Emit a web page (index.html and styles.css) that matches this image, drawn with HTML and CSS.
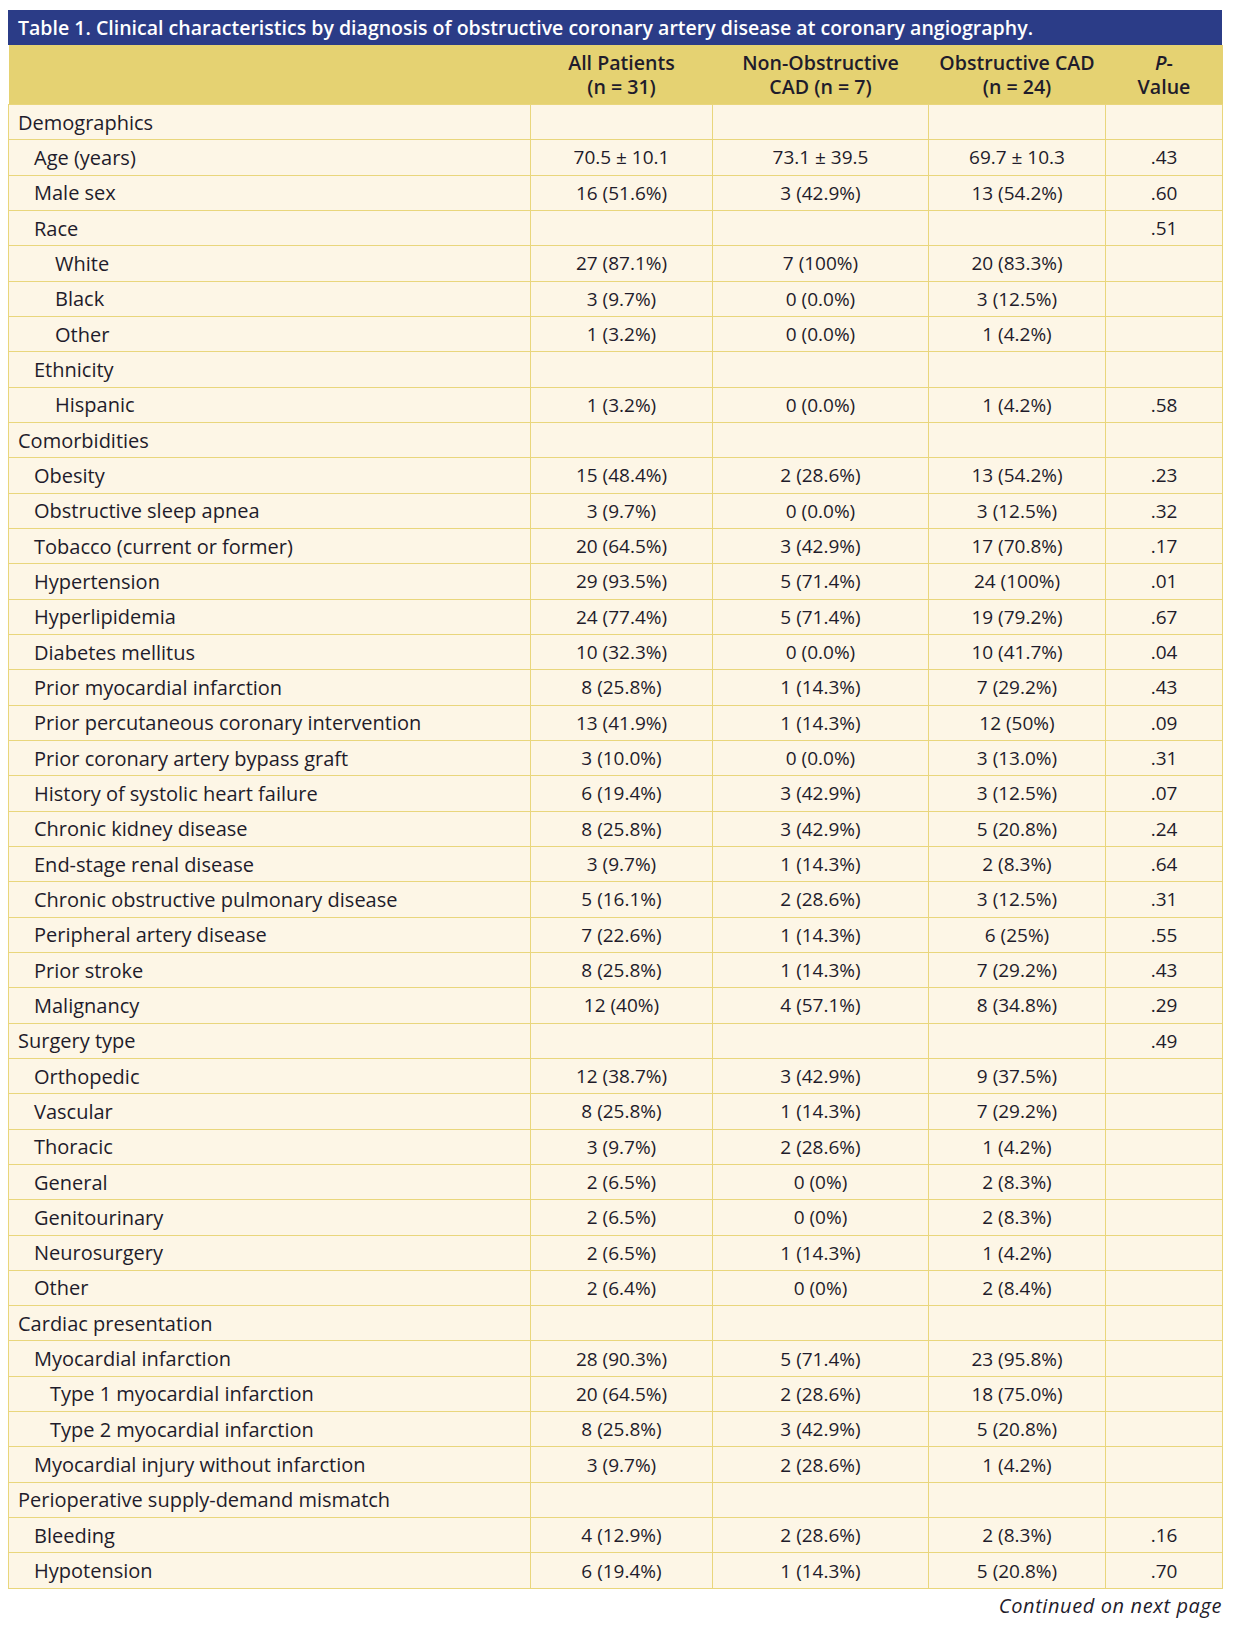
FILE: index.html
```html
<!DOCTYPE html>
<html lang="en">
<head>
<meta charset="utf-8">
<title>Table 1</title>
<link rel="stylesheet" href="styles.css">
</head>
<body>
<div class="page">
  <div class="caption">Table 1. Clinical characteristics by diagnosis of obstructive coronary artery disease at coronary angiography.</div>
  <table class="data">
    <colgroup>
      <col class="c-label"><col class="c-all"><col class="c-non"><col class="c-obs"><col class="c-p">
    </colgroup>
    <thead>
      <tr>
        <th></th>
        <th>All Patients<br>(n = 31)</th>
        <th>Non-Obstructive<br>CAD (n = 7)</th>
        <th>Obstructive CAD<br>(n = 24)</th>
        <th><i>P</i>-<br>Value</th>
      </tr>
    </thead>
    <tbody>
      <tr><td class="l0">Demographics</td><td></td><td></td><td></td><td></td></tr>
      <tr><td class="l1">Age (years)</td><td>70.5 ± 10.1</td><td>73.1 ± 39.5</td><td>69.7 ± 10.3</td><td>.43</td></tr>
      <tr><td class="l1">Male sex</td><td>16 (51.6%)</td><td>3 (42.9%)</td><td>13 (54.2%)</td><td>.60</td></tr>
      <tr><td class="l1">Race</td><td></td><td></td><td></td><td>.51</td></tr>
      <tr><td class="l2">White</td><td>27 (87.1%)</td><td>7 (100%)</td><td>20 (83.3%)</td><td></td></tr>
      <tr><td class="l2">Black</td><td>3 (9.7%)</td><td>0 (0.0%)</td><td>3 (12.5%)</td><td></td></tr>
      <tr><td class="l2">Other</td><td>1 (3.2%)</td><td>0 (0.0%)</td><td>1 (4.2%)</td><td></td></tr>
      <tr><td class="l1">Ethnicity</td><td></td><td></td><td></td><td></td></tr>
      <tr><td class="l2">Hispanic</td><td>1 (3.2%)</td><td>0 (0.0%)</td><td>1 (4.2%)</td><td>.58</td></tr>
      <tr><td class="l0">Comorbidities</td><td></td><td></td><td></td><td></td></tr>
      <tr><td class="l1">Obesity</td><td>15 (48.4%)</td><td>2 (28.6%)</td><td>13 (54.2%)</td><td>.23</td></tr>
      <tr><td class="l1">Obstructive sleep apnea</td><td>3 (9.7%)</td><td>0 (0.0%)</td><td>3 (12.5%)</td><td>.32</td></tr>
      <tr><td class="l1">Tobacco (current or former)</td><td>20 (64.5%)</td><td>3 (42.9%)</td><td>17 (70.8%)</td><td>.17</td></tr>
      <tr><td class="l1">Hypertension</td><td>29 (93.5%)</td><td>5 (71.4%)</td><td>24 (100%)</td><td>.01</td></tr>
      <tr><td class="l1">Hyperlipidemia</td><td>24 (77.4%)</td><td>5 (71.4%)</td><td>19 (79.2%)</td><td>.67</td></tr>
      <tr><td class="l1">Diabetes mellitus</td><td>10 (32.3%)</td><td>0 (0.0%)</td><td>10 (41.7%)</td><td>.04</td></tr>
      <tr><td class="l1">Prior myocardial infarction</td><td>8 (25.8%)</td><td>1 (14.3%)</td><td>7 (29.2%)</td><td>.43</td></tr>
      <tr><td class="l1">Prior percutaneous coronary intervention</td><td>13 (41.9%)</td><td>1 (14.3%)</td><td>12 (50%)</td><td>.09</td></tr>
      <tr><td class="l1">Prior coronary artery bypass graft</td><td>3 (10.0%)</td><td>0 (0.0%)</td><td>3 (13.0%)</td><td>.31</td></tr>
      <tr><td class="l1">History of systolic heart failure</td><td>6 (19.4%)</td><td>3 (42.9%)</td><td>3 (12.5%)</td><td>.07</td></tr>
      <tr><td class="l1">Chronic kidney disease</td><td>8 (25.8%)</td><td>3 (42.9%)</td><td>5 (20.8%)</td><td>.24</td></tr>
      <tr><td class="l1">End-stage renal disease</td><td>3 (9.7%)</td><td>1 (14.3%)</td><td>2 (8.3%)</td><td>.64</td></tr>
      <tr><td class="l1">Chronic obstructive pulmonary disease</td><td>5 (16.1%)</td><td>2 (28.6%)</td><td>3 (12.5%)</td><td>.31</td></tr>
      <tr><td class="l1">Peripheral artery disease</td><td>7 (22.6%)</td><td>1 (14.3%)</td><td>6 (25%)</td><td>.55</td></tr>
      <tr><td class="l1">Prior stroke</td><td>8 (25.8%)</td><td>1 (14.3%)</td><td>7 (29.2%)</td><td>.43</td></tr>
      <tr><td class="l1">Malignancy</td><td>12 (40%)</td><td>4 (57.1%)</td><td>8 (34.8%)</td><td>.29</td></tr>
      <tr><td class="l0">Surgery type</td><td></td><td></td><td></td><td>.49</td></tr>
      <tr><td class="l1">Orthopedic</td><td>12 (38.7%)</td><td>3 (42.9%)</td><td>9 (37.5%)</td><td></td></tr>
      <tr><td class="l1">Vascular</td><td>8 (25.8%)</td><td>1 (14.3%)</td><td>7 (29.2%)</td><td></td></tr>
      <tr><td class="l1">Thoracic</td><td>3 (9.7%)</td><td>2 (28.6%)</td><td>1 (4.2%)</td><td></td></tr>
      <tr><td class="l1">General</td><td>2 (6.5%)</td><td>0 (0%)</td><td>2 (8.3%)</td><td></td></tr>
      <tr><td class="l1">Genitourinary</td><td>2 (6.5%)</td><td>0 (0%)</td><td>2 (8.3%)</td><td></td></tr>
      <tr><td class="l1">Neurosurgery</td><td>2 (6.5%)</td><td>1 (14.3%)</td><td>1 (4.2%)</td><td></td></tr>
      <tr><td class="l1">Other</td><td>2 (6.4%)</td><td>0 (0%)</td><td>2 (8.4%)</td><td></td></tr>
      <tr><td class="l0">Cardiac presentation</td><td></td><td></td><td></td><td></td></tr>
      <tr><td class="l1">Myocardial infarction</td><td>28 (90.3%)</td><td>5 (71.4%)</td><td>23 (95.8%)</td><td></td></tr>
      <tr><td class="l1b">Type 1 myocardial infarction</td><td>20 (64.5%)</td><td>2 (28.6%)</td><td>18 (75.0%)</td><td></td></tr>
      <tr><td class="l1b">Type 2 myocardial infarction</td><td>8 (25.8%)</td><td>3 (42.9%)</td><td>5 (20.8%)</td><td></td></tr>
      <tr><td class="l1">Myocardial injury without infarction</td><td>3 (9.7%)</td><td>2 (28.6%)</td><td>1 (4.2%)</td><td></td></tr>
      <tr><td class="l0">Perioperative supply-demand mismatch</td><td></td><td></td><td></td><td></td></tr>
      <tr><td class="l1">Bleeding</td><td>4 (12.9%)</td><td>2 (28.6%)</td><td>2 (8.3%)</td><td>.16</td></tr>
      <tr><td class="l1">Hypotension</td><td>6 (19.4%)</td><td>1 (14.3%)</td><td>5 (20.8%)</td><td>.70</td></tr>
    </tbody>
  </table>
  <div class="continued">Continued on next page</div>
</div>
</body>
</html>
```

FILE: styles.css
```css
html, body {
  margin: 0;
  padding: 0;
  background: #ffffff;
}

.page {
  padding: 10px 22px 0 8px;
  font-family: "Open Sans", "Noto Sans", "Liberation Sans", sans-serif;
  color: #1f1c2b;
}

.caption {
  background: #2b3c87;
  color: #ffffff;
  font-size: 19.55px;
  font-weight: 600;
  height: 35px;
  line-height: 35px;
  padding-left: 10px;
  white-space: nowrap;
}

.data {
  width: 1214px;
  border-collapse: collapse;
  table-layout: fixed;
  font-size: 19px;
}

.c-label { width: 522px; }
.c-all { width: 182px; }
.c-non { width: 216px; }
.c-obs { width: 177px; }
.c-p { width: 117px; }

.data thead th {
  background: #e5d272;
  height: 59px;
  padding: 0;
  font-size: 19.6px;
  font-weight: 600;
  line-height: 24px;
  text-align: center;
  vertical-align: middle;
  border: 0;
}

.data tbody tr {
  height: 35.33px;
}

.data tbody td {
  background: #fdf6e6;
  border: 1px solid #e9d67c;
  padding: 0;
  text-align: center;
  vertical-align: middle;
  white-space: nowrap;
}

.data tbody td.l0,
.data tbody td.l1,
.data tbody td.l1b,
.data tbody td.l2 {
  text-align: left;
  font-size: 20px;
}

.data tbody td.l0 { padding-left: 9px; }
.data tbody td.l1 { padding-left: 25px; }
.data tbody td.l1b { padding-left: 41px; }
.data tbody td.l2 { padding-left: 46px; }

.continued {
  text-align: right;
  font-style: italic;
  font-size: 20px;
  letter-spacing: 0.6px;
  margin-top: 3px;
}
```
